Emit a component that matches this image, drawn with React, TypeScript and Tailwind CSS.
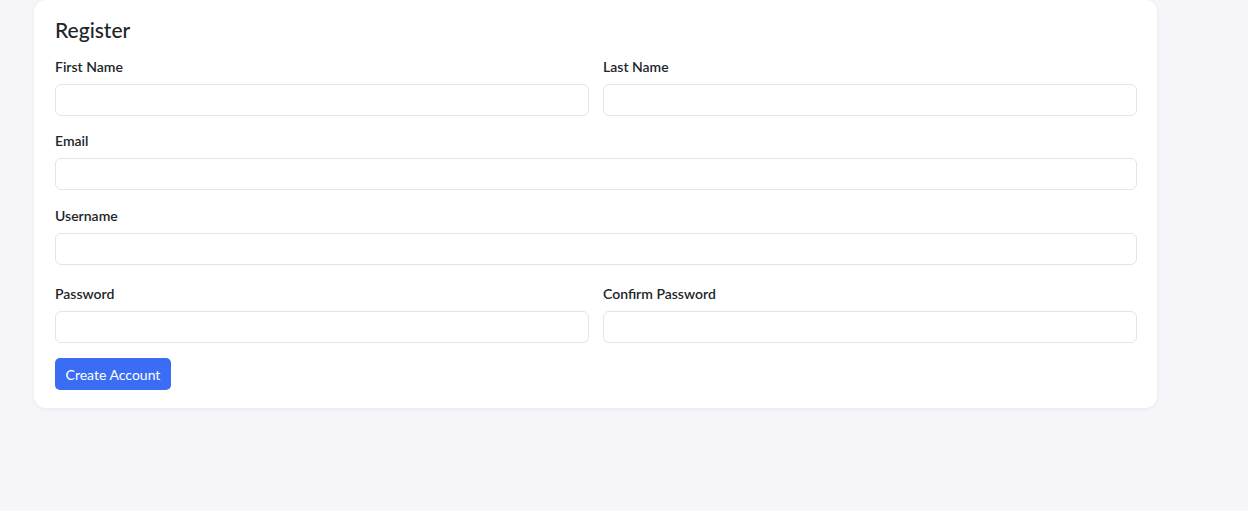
import React from 'react';

const Field = ({ label, type = 'text', className = '' }: { label: string; type?: string; className?: string }) => (
    <div className={`flex flex-col ${className}`}>
        <label className="text-[14px] leading-[20px] font-semibold text-[#212529] mb-[7px]">{label}</label>
        <input type={type} className="h-[32px] w-full rounded-md border border-[#e3e4e8] bg-white px-3 text-[14px] outline-none" />
    </div>
);

export default function App() {
    return (
        <div className="min-h-[511px] w-full bg-[#f6f6fa]" style={{ fontFamily: 'Lato, "Open Sans", sans-serif' }}>
            <div className="ml-[34px] w-[1123px] rounded-xl bg-white pl-[21px] pr-[20px] pt-[16px] pb-[18px] shadow-[0_1px_4px_rgba(0,0,0,0.06)]">
                <h1 className="text-[21px] leading-[28px] font-medium text-[#212529] mb-[13px]">Register</h1>
                <div className="grid grid-cols-2 gap-x-[14px]">
                    <Field label="First Name" />
                    <Field label="Last Name" />
                </div>
                <Field label="Email" type="email" className="mt-[15px]" />
                <Field label="Username" className="mt-[16px]" />
                <div className="grid grid-cols-2 gap-x-[14px] mt-[19px]">
                    <Field label="Password" type="password" />
                    <Field label="Confirm Password" type="password" />
                </div>
                <button className="mt-[15px] h-[32px] w-[116px] rounded-[5px] bg-[#3b6df4] text-[14px] text-white">Create Account</button>
            </div>
        </div>
    );
}
